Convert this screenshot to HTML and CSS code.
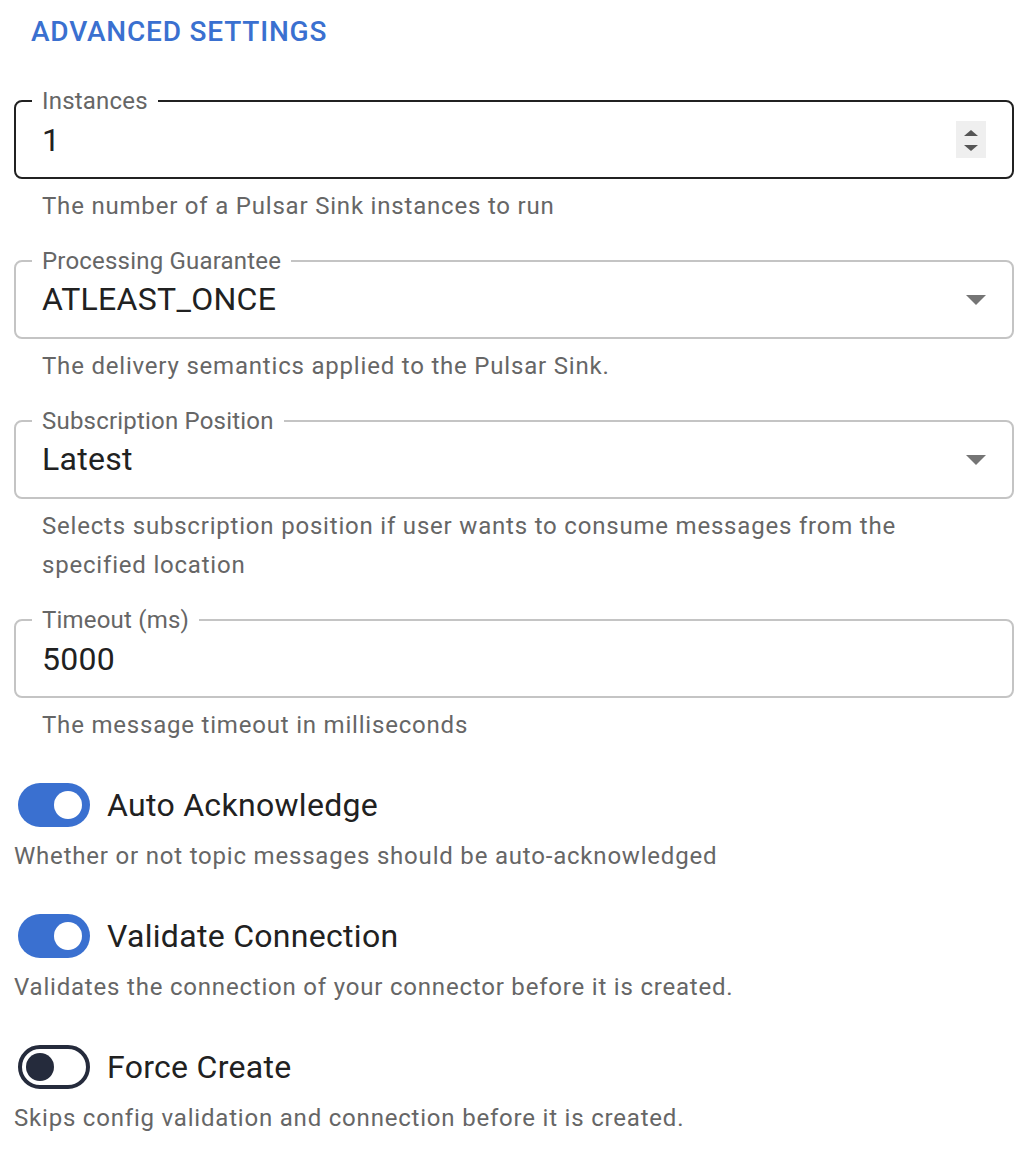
FILE: index.html
```html
<!DOCTYPE html>
<html lang="en">
<head>
<meta charset="utf-8">
<title>Advanced Settings</title>
<link rel="stylesheet" href="styles.css">
</head>
<body>
<div class="page">
  <h2 class="section-title">ADVANCED SETTINGS</h2>

  <div class="field">
    <div class="box box--active">
      <span class="label">Instances</span>
      <span class="value">1</span>
      <span class="spinner">
        <svg width="30" height="37" viewBox="0 0 30 37" aria-hidden="true">
          <rect width="30" height="37" fill="#efefef"/>
          <polygon points="8,15 22,15 15,9" fill="#555"/>
          <polygon points="8,24 22,24 15,30" fill="#555"/>
        </svg>
      </span>
    </div>
    <p class="helper">The number of a Pulsar Sink instances to run</p>
  </div>

  <div class="field">
    <div class="box">
      <span class="label">Processing Guarantee</span>
      <span class="value">ATLEAST_ONCE</span>
      <svg class="caret" width="20" height="10" viewBox="0 0 20 10" aria-hidden="true"><polygon points="0,0 20,0 10,10" fill="#757575"/></svg>
    </div>
    <p class="helper">The delivery semantics applied to the Pulsar Sink.</p>
  </div>

  <div class="field">
    <div class="box">
      <span class="label">Subscription Position</span>
      <span class="value">Latest</span>
      <svg class="caret" width="20" height="10" viewBox="0 0 20 10" aria-hidden="true"><polygon points="0,0 20,0 10,10" fill="#757575"/></svg>
    </div>
    <p class="helper">Selects subscription position if user wants to consume messages from the specified location</p>
  </div>

  <div class="field">
    <div class="box">
      <span class="label">Timeout (ms)</span>
      <span class="value">5000</span>
    </div>
    <p class="helper">The message timeout in milliseconds</p>
  </div>

  <div class="switch-field">
    <div class="switch-row">
      <span class="switch switch--on"><span class="knob"></span></span>
      <span class="switch-label">Auto Acknowledge</span>
    </div>
    <p class="switch-helper">Whether or not topic messages should be auto-acknowledged</p>
  </div>

  <div class="switch-field">
    <div class="switch-row">
      <span class="switch switch--on"><span class="knob"></span></span>
      <span class="switch-label">Validate Connection</span>
    </div>
    <p class="switch-helper">Validates the connection of your connector before it is created.</p>
  </div>

  <div class="switch-field">
    <div class="switch-row">
      <span class="switch switch--off"><span class="knob"></span></span>
      <span class="switch-label">Force Create</span>
    </div>
    <p class="switch-helper">Skips config validation and connection before it is created.</p>
  </div>
</div>
</body>
</html>
```

FILE: styles.css
```css
* { box-sizing: border-box; }

html, body {
  margin: 0;
  padding: 0;
  background: #ffffff;
}

body {
  font-family: Roboto, "Liberation Sans", Arial, sans-serif;
  color: #212121;
}

.page {
  width: 1000px;
  margin-left: 14px;
}

.section-title {
  margin: 8px 0 0 0;
  padding-left: 17px;
  font-size: 28px;
  font-weight: 500;
  line-height: 48px;
  letter-spacing: 0.8px;
  color: #3a70d0;
}

.field {
  margin-top: 33px;
}

.section-title + .field {
  margin-top: 44px;
}

.box {
  position: relative;
  display: flex;
  align-items: center;
  height: 79px;
  padding: 0 26px;
  border: 2px solid #c4c4c4;
  border-radius: 8px;
}

.box--active {
  border-color: #212121;
}

.label {
  position: absolute;
  top: -13px;
  left: 16px;
  padding: 0 10px;
  background: #ffffff;
  font-size: 24px;
  line-height: 24px;
  color: #666666;
  letter-spacing: 0.2px;
}

.value {
  flex: 1;
  font-size: 32px;
  line-height: 46px;
  letter-spacing: 0.3px;
  color: #212121;
}

.spinner {
  display: flex;
  margin-top: -1px;
}

.caret {
  display: block;
  margin-top: 1px;
}

.helper {
  margin: 8px 28px 0 28px;
  font-size: 24px;
  line-height: 1.66;
  letter-spacing: 0.8px;
  color: #666666;
}

.switch-field {
  margin-top: 35px;
}

.switch-field + .switch-field {
  margin-top: 35px;
}

.switch-row {
  display: flex;
  align-items: center;
  height: 48px;
}

.switch {
  display: flex;
  align-items: center;
  width: 72px;
  height: 44px;
  margin-left: 4px;
  margin-right: 17px;
  border-radius: 22px;
}

.switch--on {
  background: #3a70d0;
  justify-content: flex-end;
  padding-right: 8px;
}

.switch--on .knob {
  width: 28px;
  height: 28px;
  border-radius: 50%;
  background: #ffffff;
}

.switch--off {
  border: 4px solid #252b3c;
  padding-left: 4px;
}

.switch--off .knob {
  width: 28px;
  height: 28px;
  border-radius: 50%;
  background: #252b3c;
}

.switch-label {
  font-size: 32px;
  line-height: 48px;
  letter-spacing: 0.3px;
  color: #212121;
}

.switch-helper {
  margin: 8px 0 0 0;
  font-size: 24px;
  line-height: 1.66;
  letter-spacing: 0.8px;
  color: #666666;
}
```
